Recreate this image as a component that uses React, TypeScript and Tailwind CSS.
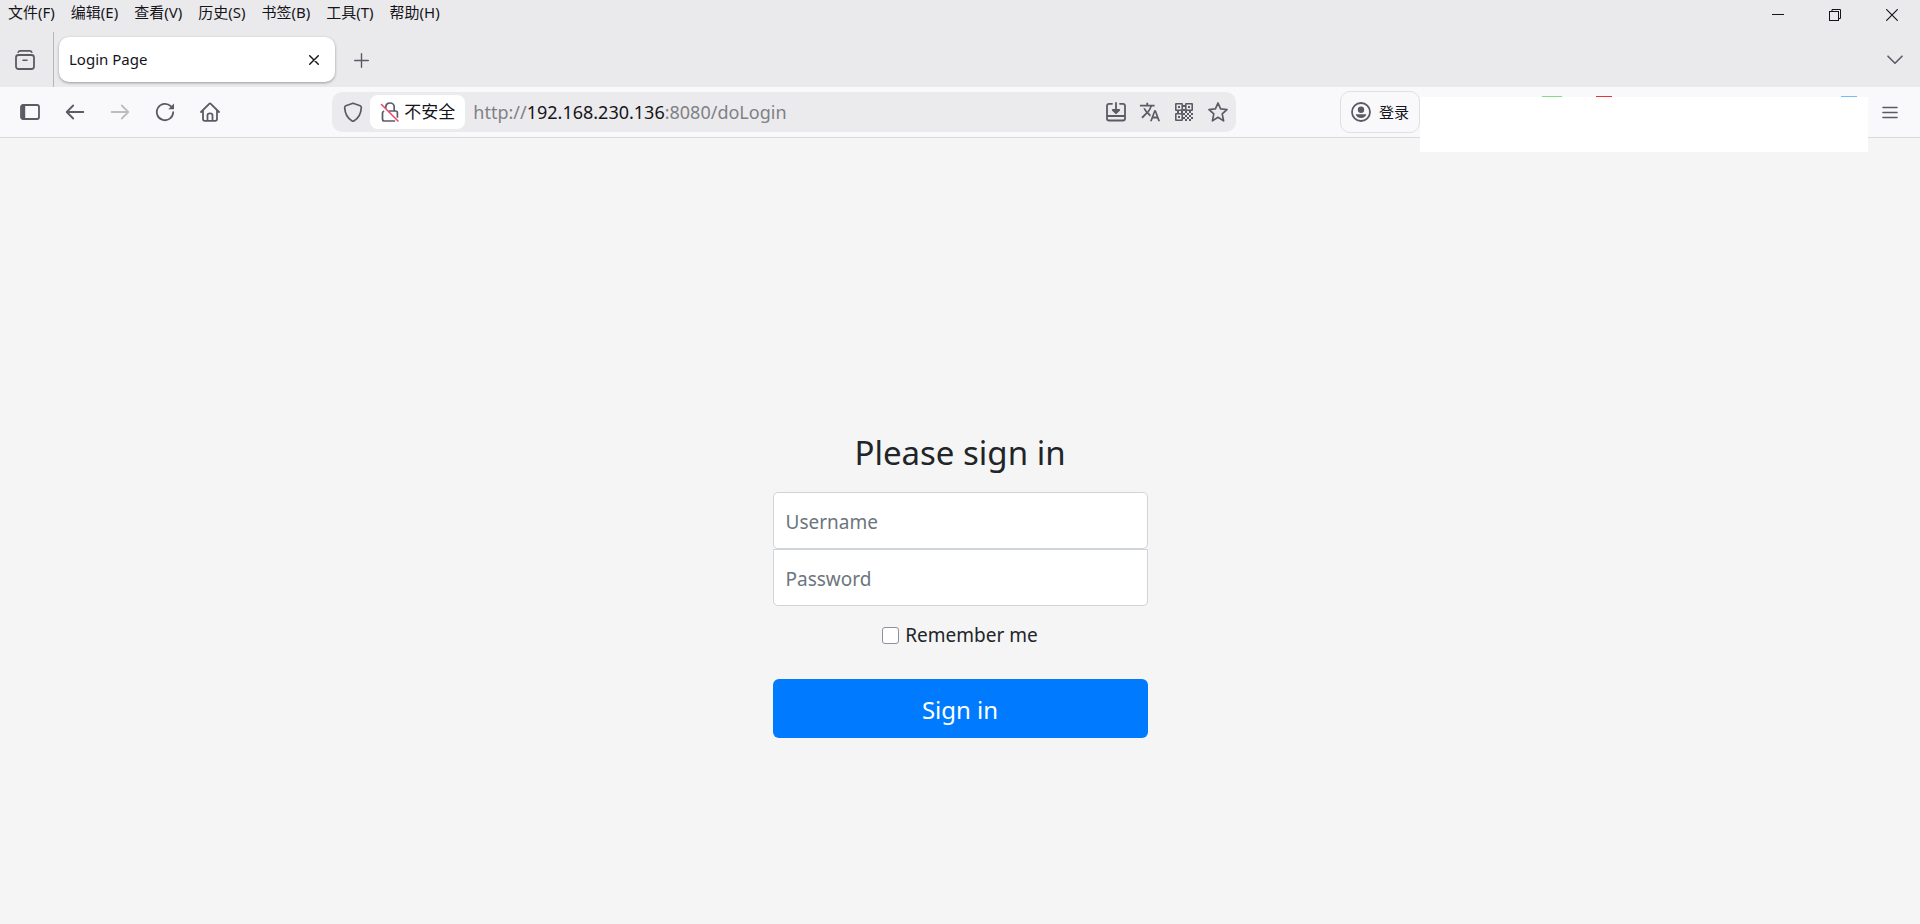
import { FormEvent, ReactNode, useState } from "react";
import { MdTranslate } from "react-icons/md";

const menuItems = ["文件(F)", "编辑(E)", "查看(V)", "历史(S)", "书签(B)", "工具(T)", "帮助(H)"];

const Icon = ({ children, className = "size-5" }: { children: ReactNode; className?: string }) => (
    <svg
        viewBox="0 0 20 20"
        className={className}
        fill="none"
        stroke="currentColor"
        strokeWidth="1.8"
        strokeLinecap="round"
        strokeLinejoin="round"
        aria-hidden="true"
    >
        {children}
    </svg>
);

const IconButton = ({ label, className, children }: { label: string; className: string; children: ReactNode }) => (
    <button type="button" aria-label={label} className={`flex shrink-0 items-center justify-center ${className}`}>
        {children}
    </button>
);

const MenuBar = () => (
    <div className="flex h-7 items-start justify-between text-[15px] leading-6 text-[#15141a]">
        <nav className="flex gap-4 pl-2">
            {menuItems.map(item => (
                <button key={item} type="button" className="whitespace-nowrap">{item}</button>
            ))}
        </nav>
        <div className="flex">
            <IconButton label="最小化" className="h-[30px] w-[57px]">
                <svg viewBox="0 0 12 12" className="size-3" stroke="currentColor" aria-hidden="true">
                    <path d="M0 5.5H12" />
                </svg>
            </IconButton>
            <IconButton label="还原" className="h-[30px] w-[57px]">
                <svg viewBox="0 0 12 12" className="size-3" fill="none" stroke="currentColor" aria-hidden="true">
                    <rect x="0.5" y="2.5" width="9" height="9" />
                    <path d="M3 2.5V0.5H11.5V9.5H9.5" />
                </svg>
            </IconButton>
            <IconButton label="关闭" className="h-[30px] w-[57px]">
                <svg viewBox="0 0 12 12" className="size-3" stroke="currentColor" strokeWidth="1.2" aria-hidden="true">
                    <path d="M0.3 0.3L11.7 11.7M11.7 0.3L0.3 11.7" />
                </svg>
            </IconButton>
        </div>
    </div>
);

const TabBar = () => (
    <div className="flex h-[59px] items-end pt-1 text-[#5b5b66]">
        <IconButton label="最近浏览" className="h-[55px] w-[53px] pr-1">
            <Icon>
                <rect x="1" y="5" width="18" height="14" rx="2.5" />
                <path d="M3.2 2.2C3.6 1.2 4.3 0.9 5.2 0.9H14.8C15.7 0.9 16.4 1.2 16.8 2.2M8 10.2H12" strokeWidth="1.6" />
            </Icon>
        </IconButton>
        <div className="h-[55px] w-px shrink-0 bg-[#b4b4b9]" />
        <div className="mb-[5px] ml-[5px] flex h-[45px] w-[276px] items-center justify-between rounded-[10px] bg-white pr-2.5 pl-2.5 text-[#15141a] shadow-[0_1px_3px_rgba(0,0,0,0.35)]">
            <span className="text-[15px]">Login Page</span>
            <IconButton label="关闭标签页" className="size-[23px]">
                <svg viewBox="0 0 10 10" className="size-2.5" stroke="currentColor" strokeWidth="1.4" strokeLinecap="round" aria-hidden="true">
                    <path d="M0.7 0.7L9.3 9.3M9.3 0.7L0.7 9.3" />
                </svg>
            </IconButton>
        </div>
        <IconButton label="新建标签页" className="mb-1 ml-1 size-[45px]">
            <svg viewBox="0 0 15 15" className="size-[15px]" stroke="currentColor" strokeWidth="1.4" strokeLinecap="round" aria-hidden="true">
                <path d="M7.5 0.7V14.3M0.7 7.5H14.3" />
            </svg>
        </IconButton>
        <div className="flex-1" />
        <IconButton label="列出所有标签页" className="mb-[5px] h-[45px] w-[50px]">
            <svg viewBox="0 0 16 10" className="h-2.5 w-4" fill="none" stroke="currentColor" strokeWidth="1.6" strokeLinecap="round" strokeLinejoin="round" aria-hidden="true">
                <path d="M1 1.2L8 8.2L15 1.2" />
            </svg>
        </IconButton>
    </div>
);

const QrIcon = () => (
    <svg viewBox="0 0 18 18" className="size-[18px]" fill="currentColor" aria-hidden="true">
        <path fillRule="evenodd" d="M1 0H7Q8 0 8 1V7Q8 8 7 8H1Q0 8 0 7V1Q0 0 1 0ZM1.6 1.6V6.4H6.4V1.6ZM3 3H5V5H3Z" />
        <path fillRule="evenodd" d="M11 0H17Q18 0 18 1V7Q18 8 17 8H11Q10 8 10 7V1Q10 0 11 0ZM11.6 1.6V6.4H16.4V1.6ZM13 3H15V5H13Z" />
        <path fillRule="evenodd" d="M1 10H7Q8 10 8 11V17Q8 18 7 18H1Q0 18 0 17V11Q0 10 1 10ZM1.6 11.6V16.4H6.4V11.6ZM3 13H5V15H3Z" />
        <path d="M8 2H10V4H8ZM2 8H4V10H2ZM6 8H8V10H6ZM8 6H10V8H8ZM10 8H12V10H10ZM14 8H16V10H14ZM8 10H10V12H8ZM12 10H14V12H12ZM16 10H18V12H16ZM10 12H12V14H10ZM14 12H16V14H14ZM8 14H10V16H8ZM12 14H14V16H12ZM16 14H18V16H16ZM10 16H12V18H10ZM14 16H16V18H14Z" />
    </svg>
);

const UrlBar = () => {
    const [url] = useState({ scheme: "http://", host: "192.168.230.136", rest: ":8080/doLogin" });

    return (
        <div className="flex h-10 min-w-0 flex-[9] items-center rounded-[10px] bg-[#ebebed] pr-px text-[#5b5b66]">
            <IconButton label="跟踪保护" className="h-8 w-[38px] pl-1">
                <Icon>
                    <path d="M10 1.2L17.2 3.8C18 4.1 18.4 4.6 18.3 5.6C18 11.5 15.6 16.2 10.9 18.9C10.3 19.2 9.7 19.2 9.1 18.9C4.4 16.2 2 11.5 1.7 5.6C1.6 4.6 2 4.1 2.8 3.8Z" strokeWidth="1.7" />
                </Icon>
            </IconButton>
            <button type="button" className="flex h-[34px] shrink-0 items-center gap-1 rounded-[8px] bg-white px-2.5 text-[17px] text-[#15141a]">
                <Icon className="size-5 text-[#5b5b66]">
                    <path d="M5.8 6V5C5.8 2.6 7.6 1 10 1S14.2 2.6 14.2 5V9M3.5 9.5C2.8 9.9 2.5 10.4 2.5 11V17C2.5 18.2 3.2 19 4.4 19H14.5M9.5 9H15.5C16.6 9 17.4 9.8 17.4 10.9V15" strokeWidth="1.7" />
                    <path d="M1.5 2.5L18 19" stroke="#f0466e" strokeWidth="1.6" />
                </Icon>
                <span className="whitespace-nowrap">不安全</span>
            </button>
            <div className="min-w-0 flex-1 truncate pl-2 text-[18px] text-[#808086]">
                {url.scheme}<span className="text-[#15141a]">{url.host}</span>{url.rest}
            </div>
            <IconButton label="安装" className="h-8 w-[34px]">
                <Icon>
                    <path d="M6 1.8H3C1.8 1.8 1 2.6 1 3.8V16.5C1 17.7 1.8 18.5 3 18.5H17C18.2 18.5 19 17.7 19 16.5V3.8C19 2.6 18.2 1.8 17 1.8H14M1 14H19" />
                    <path d="M10 1V10M6.8 8L10 11.2L13.2 8Z" />
                </Icon>
            </IconButton>
            <IconButton label="翻译此页面" className="h-8 w-[34px]">
                <MdTranslate className="size-[22px]" />
            </IconButton>
            <IconButton label="二维码" className="h-8 w-[34px]">
                <QrIcon />
            </IconButton>
            <IconButton label="添加书签" className="h-8 w-[34px]">
                <Icon>
                    <path d="M10 1L12.6 6.9L19 7.5L14.2 11.8L15.6 18.9L10 15.3L4.4 18.9L5.8 11.8L1 7.5L7.4 6.9Z" strokeWidth="1.7" />
                </Icon>
            </IconButton>
        </div>
    );
};

const ToolBar = () => (
    <div className="flex h-[51px] items-center border-b border-[#d9d9de] bg-[#f9f9fb] text-[#5b5b66]">
        <div className="flex pl-[7px]">
            <IconButton label="侧栏" className="h-10 w-[45px]">
                <Icon>
                    <rect x="1" y="3" width="18" height="14" rx="2" />
                    <path d="M1.5 3H5.2V17H1.5Z" fill="currentColor" stroke="none" />
                </Icon>
            </IconButton>
            <IconButton label="后退" className="h-10 w-[45px]">
                <Icon>
                    <path d="M18.3 10H1.8M8.2 3.5L1.7 10L8.2 16.5" />
                </Icon>
            </IconButton>
            <IconButton label="前进" className="h-10 w-[45px] text-[#bdbdc1]">
                <Icon>
                    <path d="M1.7 10H18.2M11.8 3.5L18.3 10L11.8 16.5" />
                </Icon>
            </IconButton>
            <IconButton label="刷新" className="h-10 w-[45px]">
                <Icon>
                    <path d="M18.2 10.2A8.2 8.2 0 1 1 15.8 4.2" />
                    <path d="M19 1.5V7.2H13.3Z" fill="currentColor" stroke="none" />
                </Icon>
            </IconButton>
            <IconButton label="主页" className="h-10 w-[45px]">
                <Icon>
                    <path d="M1 10L9.2 1.8C9.7 1.3 10.3 1.3 10.8 1.8L19 10M3 8.5V17C3 18.1 3.8 18.9 4.9 18.9H15.1C16.2 18.9 17 18.1 17 17V8.5M7.5 18.5V13C7.5 11.9 8.3 11.4 10 11.4S12.5 11.9 12.5 13V18.5" />
                </Icon>
            </IconButton>
        </div>
        <div className="flex-1" />
        <UrlBar />
        <div className="flex-1" />
        <button type="button" className="ml-1 flex h-[42px] w-20 shrink-0 items-center justify-center gap-2 rounded-[10px] border border-[#e0e0e4] text-[15px] text-[#15141a]">
            <Icon className="size-5 text-[#5b5b66]">
                <circle cx="10" cy="10" r="9" />
                <circle cx="10" cy="7.8" r="3.2" fill="currentColor" stroke="none" />
                <path d="M4.6 12.2H15.4C14.8 14.5 12.6 16 10 16S5.2 14.5 4.6 12.2Z" fill="currentColor" stroke="none" />
            </Icon>
            <span className="whitespace-nowrap">登录</span>
        </button>
        {/* extensions area, covered by a blank panel that hangs over the page */}
        <div className="relative h-[50px] w-[448px]">
            <div className="absolute top-[9px] left-[122px] h-px w-5 bg-[#86d987]" />
            <div className="absolute top-[9px] left-[176px] h-px w-4 bg-[#e5343a]" />
            <div className="absolute top-[9px] right-[11px] h-px w-4 bg-[#73bdfa]" />
            <div className="absolute top-2.5 right-0 left-0 h-[55px] bg-white" />
        </div>
        <IconButton label="打开应用程序菜单" className="mr-2 h-10 w-11">
            <svg viewBox="0 0 16 13" className="h-[13px] w-4" stroke="currentColor" strokeWidth="1.6" strokeLinecap="round" aria-hidden="true">
                <path d="M1 1.5H15M1 6.5H15M1 11.5H15" />
            </svg>
        </IconButton>
    </div>
);

const LoginForm = () => {
    const [form, setForm] = useState({ username: "", password: "", remember: false });

    const handleSubmit = (e: FormEvent<HTMLFormElement>) => {
        e.preventDefault();
    };

    return (
        <form onSubmit={handleSubmit} className="flex w-full max-w-[375px] flex-col text-center text-[19px] text-[#212529]">
            <h1 className="mb-[18px] text-[33px] leading-[42px]">Please sign in</h1>
            <input
                type="text"
                aria-label="Username"
                placeholder="Username"
                value={form.username}
                onChange={e => setForm({ ...form, username: e.target.value })}
                className="h-[57px] rounded-[5px] border border-[#ced4da] bg-white px-3 pt-0.5 placeholder:text-[#6c757d]"
            />
            <input
                type="password"
                aria-label="Password"
                placeholder="Password"
                value={form.password}
                onChange={e => setForm({ ...form, password: e.target.value })}
                className="h-[57px] rounded-b-[5px] border border-[#ced4da] bg-white px-3 pt-0.5 placeholder:text-[#6c757d]"
            />
            <label className="mt-3.5 flex h-[30px] items-center justify-center gap-1.5">
                <input
                    type="checkbox"
                    checked={form.remember}
                    onChange={e => setForm({ ...form, remember: e.target.checked })}
                    className="size-[17px] appearance-none rounded-[3px] border border-[#8f8f9d] bg-white checked:bg-[#007bff]"
                />
                Remember me
            </label>
            <button type="submit" className="mt-[29px] h-[59px] rounded-[6px] bg-[#007bff] pt-0.5 text-[24px] text-white">
                Sign in
            </button>
        </form>
    );
};

export default function App() {
    return (
        <div className="flex min-h-screen flex-col bg-[#f5f5f5] font-['Noto_Sans','Noto_Sans_CJK_SC',sans-serif]">
            <header className="bg-[#eaeaec]">
                <MenuBar />
                <TabBar />
                <ToolBar />
            </header>
            <main className="flex flex-1 items-center justify-center pt-[108px]">
                <LoginForm />
            </main>
        </div>
    );
}
